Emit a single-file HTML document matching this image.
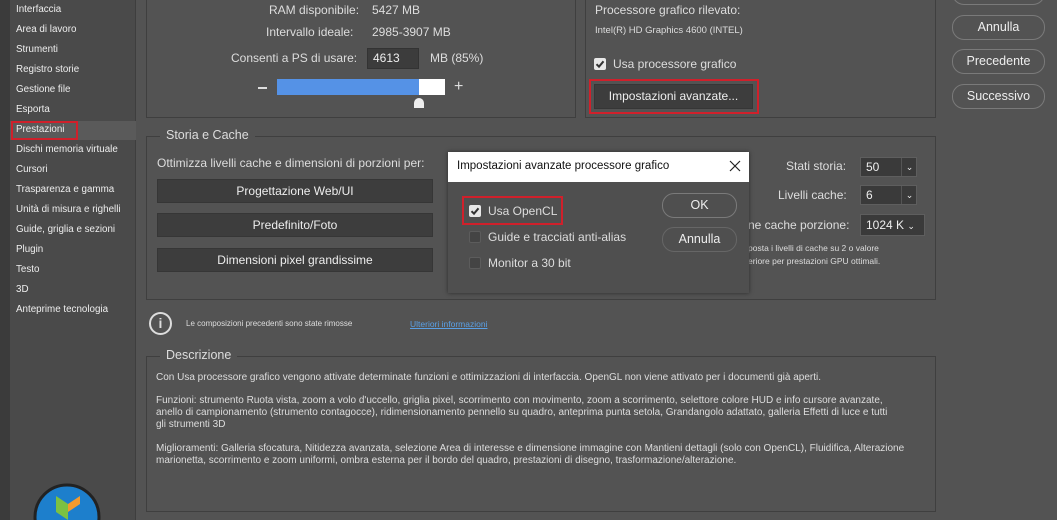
<!DOCTYPE html><html style="width:1057px;height:520px;overflow:hidden"><head><meta charset="utf-8"><style>
*{margin:0;padding:0;box-sizing:border-box}
body{width:1057px;height:520px;overflow:hidden;background:#535353;font-family:"Liberation Sans",sans-serif;color:#e6e6e6;position:relative}
.a{position:absolute;white-space:nowrap}
.side{left:0;top:0;width:10px;height:520px;background:#3b3b3b}
.sb{left:10px;top:0;width:126px;height:520px;background:#4a4a4a;border-right:1px solid #3e3e3e;overflow:hidden}
.si{left:16px;font-size:9.8px;color:#eee}
.panel{border:1px solid #3f3f3f}
.btn{background:#3d3d3d;border:1px solid #363636;color:#eee;font-size:12px;text-align:center}
.pill{border:1px solid #7a7a7a;border-radius:12px;color:#eee;font-size:12.5px;text-align:center}
.cb{width:12px;height:12px;border:1px solid #5c5c5c;background:#444;border-radius:2px}
.red{border:2px solid #d0202b}
.sel{background:#3a3a3a;border:1px solid #5e5e5e;font-size:12px;color:#eee;padding-left:5px;line-height:18px}
.t{font-size:12px;color:#ddd}
.d{font-size:10px;color:#ddd;left:156px}
</style></head><body>
<div class="a side"></div>
<div class="a sb">
<svg class="a" style="left:22px;top:482px" width="70" height="38"><circle cx="35" cy="35" r="32" fill="#1d7fcc" stroke="#222" stroke-width="3"/><path d="M24 14L36 22L36 38L24 30Z" fill="#7cc142"/><path d="M36 22L48 14L48 22L36 30Z" fill="#f39a2d"/></svg>
</div>
<div class="a" style="left:10px;top:121px;width:126px;height:19px;background:#5a5a5a"></div>
<div class="a si" style="top:4px">Interfaccia</div>
<div class="a si" style="top:24px">Area di lavoro</div>
<div class="a si" style="top:44px">Strumenti</div>
<div class="a si" style="top:64px">Registro storie</div>
<div class="a si" style="top:84px">Gestione file</div>
<div class="a si" style="top:104px">Esporta</div>
<div class="a si" style="top:124px">Prestazioni</div>
<div class="a red" style="left:11px;top:121px;width:67px;height:19px"></div>
<div class="a si" style="top:144px">Dischi memoria virtuale</div>
<div class="a si" style="top:164px">Cursori</div>
<div class="a si" style="top:184px">Trasparenza e gamma</div>
<div class="a si" style="top:204px">Unità di misura e righelli</div>
<div class="a si" style="top:224px">Guide, griglia e sezioni</div>
<div class="a si" style="top:244px">Plugin</div>
<div class="a si" style="top:264px">Testo</div>
<div class="a si" style="top:284px">3D</div>
<div class="a si" style="top:304px">Anteprime tecnologia</div>

<div class="a panel" style="left:146px;top:-2px;width:430px;height:120px"></div>
<div class="a panel" style="left:585px;top:-2px;width:351px;height:120px"></div>
<div class="a t" style="left:269px;top:3px">RAM disponibile:</div>
<div class="a t" style="left:372px;top:3px">5427 MB</div>
<div class="a t" style="left:266px;top:25px">Intervallo ideale:</div>
<div class="a t" style="left:372px;top:25px">2985-3907 MB</div>
<div class="a t" style="left:231px;top:51px">Consenti a PS di usare:</div>
<div class="a sel" style="left:367px;top:48px;width:52px;height:21px;border-color:#333;background:#3c3c3c">4613</div>
<div class="a t" style="left:430px;top:51px">MB (85%)</div>
<div class="a" style="left:258px;top:87px;width:9px;height:2px;background:#ddd"></div>
<div class="a" style="left:277px;top:79px;width:168px;height:16px;background:#fff"></div>
<div class="a" style="left:277px;top:79px;width:142px;height:16px;background:#5592e6"></div>
<div class="a" style="left:414px;top:98px;width:10px;height:10px;background:#eee;border-radius:5px 5px 0 0"></div>
<div class="a" style="left:454px;top:78px;font-size:16px;color:#ddd">+</div>
<div class="a t" style="left:595px;top:3px">Processore grafico rilevato:</div>
<div class="a" style="left:595px;top:25px;font-size:9.5px;color:#ddd">Intel(R) HD Graphics 4600 (INTEL)</div>
<svg class="a" style="left:594px;top:58px" width="12" height="12"><rect width="12" height="12" rx="2" fill="#e8e8e8"/><path d="M2.5 6.2L5 8.7L9.5 3.3" stroke="#333" stroke-width="2" fill="none"/></svg>
<div class="a t" style="left:613px;top:57px">Usa processore grafico</div>
<div class="a red" style="left:589px;top:79px;width:170px;height:35px"></div>
<div class="a btn" style="left:594px;top:84px;width:159px;height:25px;line-height:23px">Impostazioni avanzate...</div>

<div class="a pill" style="left:952px;top:-20px;width:93px;height:25px"></div>
<div class="a pill" style="left:952px;top:15px;width:93px;height:25px;line-height:23px">Annulla</div>
<div class="a pill" style="left:952px;top:49px;width:93px;height:25px;line-height:23px">Precedente</div>
<div class="a pill" style="left:952px;top:84px;width:93px;height:25px;line-height:23px">Successivo</div>

<div class="a panel" style="left:146px;top:136px;width:790px;height:164px"></div>
<div class="a" style="left:160px;top:128px;padding:0 6px;background:#535353;font-size:12.5px;color:#ddd">Storia e Cache</div>
<div class="a t" style="left:157px;top:156px">Ottimizza livelli cache e dimensioni di porzioni per:</div>
<div class="a btn" style="left:157px;top:179px;width:276px;height:24px;line-height:22px">Progettazione Web/UI</div>
<div class="a btn" style="left:157px;top:213px;width:276px;height:24px;line-height:22px">Predefinito/Foto</div>
<div class="a btn" style="left:157px;top:248px;width:276px;height:24px;line-height:22px">Dimensioni pixel grandissime</div>
<div class="a t" style="left:786px;top:159px">Stati storia:</div>
<div class="a sel" style="left:860px;top:157px;width:57px;height:20px">50<span style="position:absolute;left:40px;top:0;border-left:1px solid #555;width:16px;text-align:center;font-size:9px">⌄</span></div>
<div class="a t" style="left:778px;top:188px">Livelli cache:</div>
<div class="a sel" style="left:860px;top:185px;width:57px;height:20px">6<span style="position:absolute;left:40px;top:0;border-left:1px solid #555;width:16px;text-align:center;font-size:9px">⌄</span></div>
<div class="a t" style="left:748px;top:218px">ne cache porzione:</div>
<div class="a sel" style="left:860px;top:214px;width:65px;height:22px;line-height:20px">1024 K <span style="font-size:9px">⌄</span></div>
<div class="a" style="left:748px;top:243px;font-size:8.5px;color:#ddd">posta i livelli di cache su 2 o valore</div>
<div class="a" style="left:748px;top:256px;font-size:8.5px;color:#ddd">eriore per prestazioni GPU ottimali.</div>

<div class="a" style="left:448px;top:152px;width:301px;height:141px;background:#4f4f4f;box-shadow:0 0 4px #2a2a2a"></div>
<div class="a" style="left:448px;top:152px;width:301px;height:30px;background:#fff"></div>
<div class="a" style="left:457px;top:160px;font-size:11.5px;color:#111">Impostazioni avanzate processore grafico</div>
<svg class="a" style="left:729px;top:160px" width="12" height="12"><path d="M1 1L11 11M11 1L1 11" stroke="#222" stroke-width="1.2"/></svg>
<div class="a red" style="left:462px;top:196px;width:101px;height:29px"></div>
<svg class="a" style="left:469px;top:205px" width="12" height="12"><rect width="12" height="12" rx="2" fill="#e8e8e8"/><path d="M2.5 6.2L5 8.7L9.5 3.3" stroke="#333" stroke-width="2" fill="none"/></svg>
<div class="a t" style="left:488px;top:204px">Usa OpenCL</div>
<div class="a cb" style="left:469px;top:231px"></div>
<div class="a t" style="left:488px;top:230px">Guide e tracciati anti-alias</div>
<div class="a cb" style="left:469px;top:257px"></div>
<div class="a t" style="left:488px;top:256px">Monitor a 30 bit</div>
<div class="a pill" style="left:662px;top:193px;width:75px;height:25px;line-height:23px">OK</div>
<div class="a pill" style="left:662px;top:227px;width:75px;height:25px;line-height:23px;border-color:#666">Annulla</div>

<div class="a" style="left:149px;top:312px;width:23px;height:23px;border:2px solid #ddd;border-radius:50%;text-align:center;font-size:14px;font-weight:bold;line-height:19px;color:#ddd">i</div>
<div class="a" style="left:186px;top:319px;font-size:8px;color:#ddd">Le composizioni precedenti sono state rimosse</div>
<div class="a" style="left:410px;top:319px;font-size:8.5px;color:#5aa0e6;text-decoration:underline">Ulteriori informazioni</div>

<div class="a panel" style="left:146px;top:356px;width:790px;height:156px"></div>
<div class="a" style="left:160px;top:348px;padding:0 6px;background:#535353;font-size:12.5px;color:#ddd">Descrizione</div>
<div class="a d" style="top:372px">Con Usa processore grafico vengono attivate determinate funzioni e ottimizzazioni di interfaccia. OpenGL non viene attivato per i documenti già aperti.</div>
<div class="a d" style="top:395px">Funzioni: strumento Ruota vista, zoom a volo d'uccello, griglia pixel, scorrimento con movimento, zoom a scorrimento, selettore colore HUD e info cursore avanzate,</div>
<div class="a d" style="top:407px">anello di campionamento (strumento contagocce), ridimensionamento pennello su quadro, anteprima punta setola, Grandangolo adattato, galleria Effetti di luce e tutti</div>
<div class="a d" style="top:419px">gli strumenti 3D</div>
<div class="a d" style="top:443px">Miglioramenti: Galleria sfocatura, Nitidezza avanzata, selezione Area di interesse e dimensione immagine con Mantieni dettagli (solo con OpenCL), Fluidifica, Alterazione</div>
<div class="a d" style="top:455px">marionetta, scorrimento e zoom uniformi, ombra esterna per il bordo del quadro, prestazioni di disegno, trasformazione/alterazione.</div>
</body></html>
